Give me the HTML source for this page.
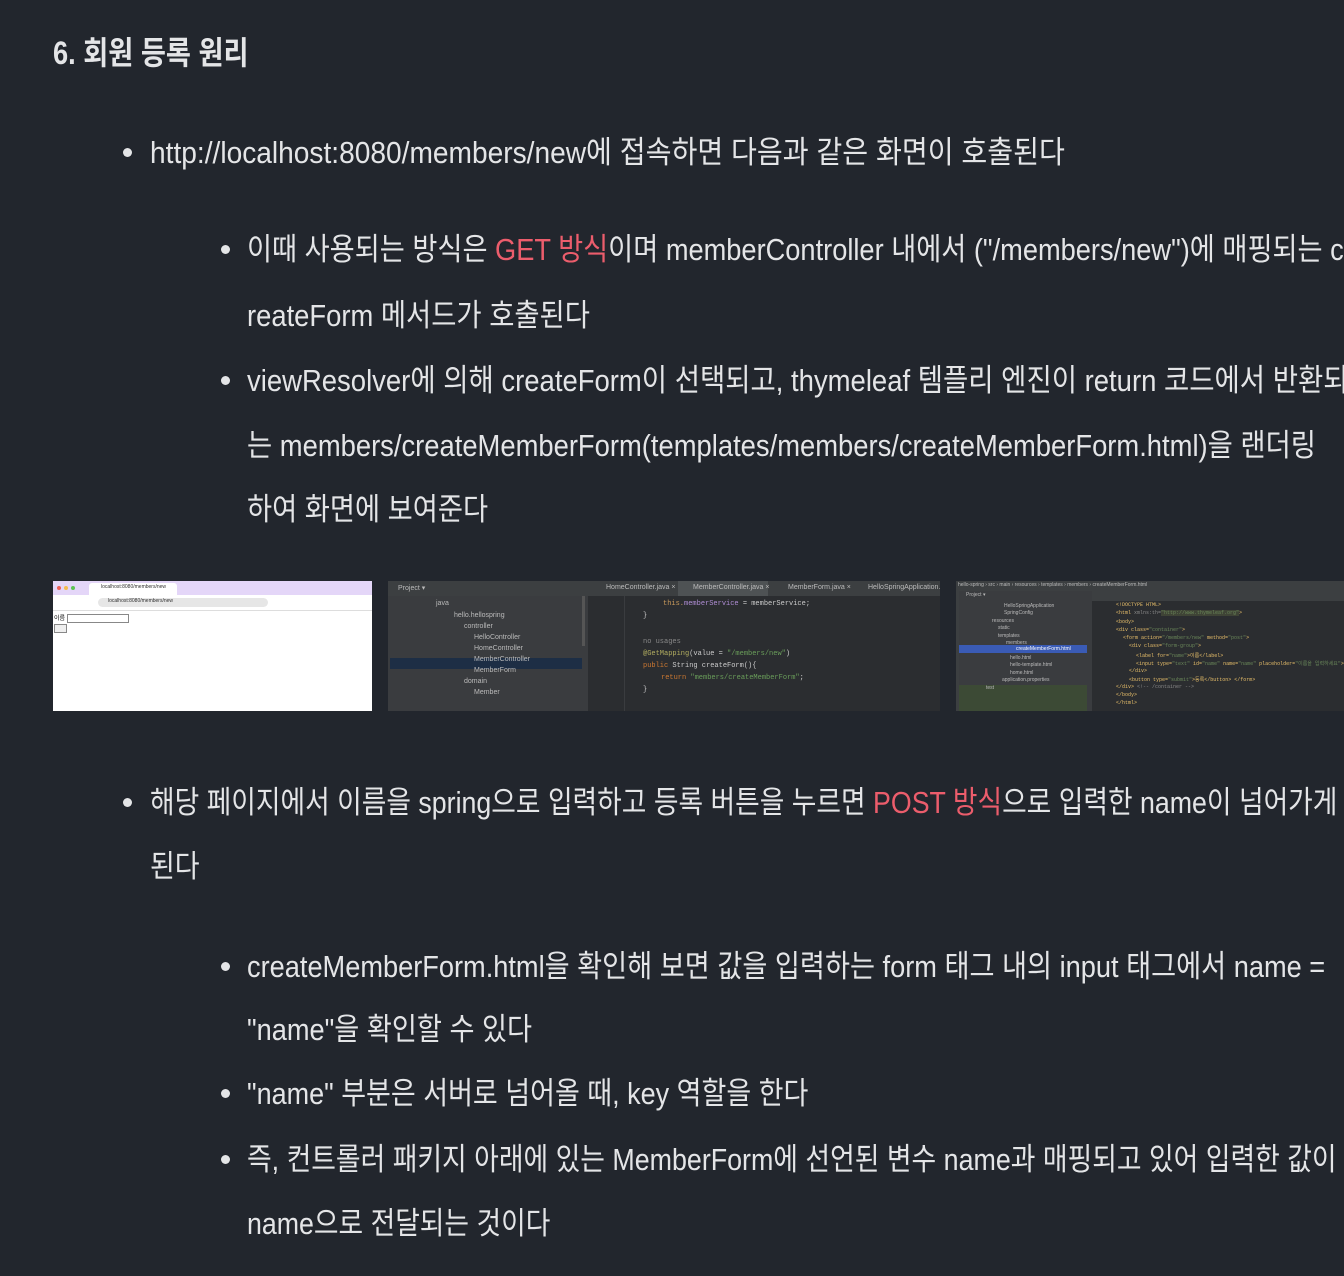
<!DOCTYPE html>
<html><head><meta charset="utf-8"><style>
html,body{margin:0;padding:0;width:1344px;height:1276px;overflow:hidden;background:#22262d;}
body{position:relative;font-family:"Liberation Sans","Noto Sans CJK KR",sans-serif;color:#e4e5e7;}
.l{position:absolute;white-space:nowrap;font-size:31px;line-height:40px;transform:scaleX(0.88);transform-origin:left center;}
.h{font-weight:bold;font-size:32px;}
.r{color:#ec5d6c;}
.b{position:absolute;width:9px;height:9px;border-radius:50%;background:#e4e5e7;}
.img{position:absolute;overflow:hidden;}
.mono{font-family:"Liberation Mono",monospace;font-size:7px;position:absolute;white-space:nowrap;}
.sm{font-size:7px;position:absolute;white-space:nowrap;color:#bbb;}
</style></head><body>
<div class="l h" style="left:53px;top:33px;transform:scaleX(0.85)">6. 회원 등록 원리</div>

<div class="b" style="left:123px;top:148px"></div>
<div class="l" style="left:150px;top:133px;transform:scaleX(0.907)">http://localhost:8080/members/new에 접속하면 다음과 같은 화면이 호출된다</div>

<div class="b" style="left:221px;top:245px"></div>
<div class="l" style="left:247px;top:230px;transform:scaleX(0.878)">이때 사용되는 방식은 <span class="r">GET 방식</span>이며 memberController 내에서 ("/members/new")에 매핑되는 c</div>
<div class="l" style="left:247px;top:296px;transform:scaleX(0.883)">reateForm 메서드가 호출된다</div>
<div class="b" style="left:221px;top:376px"></div>
<div class="l" style="left:247px;top:361px;transform:scaleX(0.886)">viewResolver에 의해 createForm이 선택되고, thymeleaf 템플리 엔진이 return 코드에서 반환되</div>
<div class="l" style="left:247px;top:426px;transform:scaleX(0.883)">는 members/createMemberForm(templates/members/createMemberForm.html)을 랜더링</div>
<div class="l" style="left:247px;top:490px;transform:scaleX(0.88)">하여 화면에 보여준다</div>

<!-- image 1: browser -->
<div class="img" style="left:53px;top:581px;width:319px;height:130px;background:#fff;">
  <div style="position:absolute;left:0;top:0;width:319px;height:14px;background:#e4d6f8;"></div>
  <div style="position:absolute;left:4px;top:5px;width:4px;height:4px;border-radius:50%;background:#ec5f57"></div>
  <div style="position:absolute;left:11px;top:5px;width:4px;height:4px;border-radius:50%;background:#f4bd4f"></div>
  <div style="position:absolute;left:18px;top:5px;width:4px;height:4px;border-radius:50%;background:#5ec454"></div>
  <div style="position:absolute;left:36px;top:2px;width:88px;height:12px;background:#fff;border-radius:3px 3px 0 0;"></div>
  <div class="sm" style="left:48px;top:3px;color:#333;font-size:5px">localhost:8080/members/new</div>
  <div style="position:absolute;left:45px;top:17px;width:170px;height:9px;background:#e6e6e6;border-radius:5px;"></div>
  <div class="sm" style="left:55px;top:17px;color:#333;font-size:5px">localhost:8080/members/new</div>
  <div style="position:absolute;left:0;top:29px;width:319px;height:1px;background:#ddd"></div>
  <div class="sm" style="left:1px;top:32px;color:#000;font-size:6px">이름</div>
  <div style="position:absolute;left:14px;top:33px;width:60px;height:7px;border:1px solid #888"></div>
  <div style="position:absolute;left:1px;top:43px;width:11px;height:7px;border:1px solid #888;background:#eee"></div>
</div>

<!-- image 2: IDE -->
<div class="img" style="left:388px;top:581px;width:552px;height:130px;background:#2b2d30;">
  <div style="position:absolute;left:0;top:0;width:552px;height:15px;background:#3c3f41"></div>
  <div class="sm" style="left:10px;top:3px">Project ▾</div>
  <div class="sm" style="left:218px;top:3px">HomeController.java ×</div>
  <div style="position:absolute;left:290px;top:0;width:90px;height:15px;background:#4e5254"></div>
  <div class="sm" style="left:305px;top:3px">MemberController.java ×</div>
  <div class="sm" style="left:400px;top:3px">MemberForm.java ×</div>
  <div class="sm" style="left:480px;top:3px">HelloSpringApplication.j</div>
  <div style="position:absolute;left:0;top:15px;width:200px;height:115px;background:#3a3c3f"></div>
  <div style="position:absolute;left:194px;top:15px;width:3px;height:50px;background:#555"></div>
  <div style="position:absolute;left:2px;top:77px;width:192px;height:11px;background:#1d2e45"></div>
  <div class="sm" style="left:48px;top:19px">java</div>
  <div class="sm" style="left:66px;top:31px">hello.hellospring</div>
  <div class="sm" style="left:76px;top:42px">controller</div>
  <div class="sm" style="left:86px;top:53px">HelloController</div>
  <div class="sm" style="left:86px;top:64px">HomeController</div>
  <div class="sm" style="left:86px;top:75px">MemberController</div>
  <div class="sm" style="left:86px;top:86px">MemberForm</div>
  <div class="sm" style="left:76px;top:97px">domain</div>
  <div class="sm" style="left:86px;top:108px">Member</div>
  <div style="position:absolute;left:200px;top:15px;width:36px;height:115px;background:#2b2d30;border-right:1px solid #3a3c3f"></div>
  <div class="mono" style="left:275px;top:19px;color:#c99a5b">this.<span style="color:#b18ed6">memberService</span> <span style="color:#ccc">= memberService;</span></div>
  <div class="mono" style="left:255px;top:31px;color:#ccc">}</div>
  <div class="mono" style="left:255px;top:57px;color:#888">no usages</div>
  <div class="mono" style="left:255px;top:69px;color:#b3ae60">@GetMapping<span style="color:#ccc">(value = </span><span style="color:#6a9e5a">"/members/new"</span><span style="color:#ccc">)</span></div>
  <div class="mono" style="left:255px;top:81px;color:#cc7832">public <span style="color:#ccc">String createForm(){</span></div>
  <div class="mono" style="left:273px;top:93px;color:#cc7832">return <span style="color:#6a9e5a">"members/createMemberForm"</span><span style="color:#ccc">;</span></div>
  <div class="mono" style="left:255px;top:105px;color:#ccc">}</div>
</div>

<!-- image 3: IDE html -->
<div class="img" style="left:956px;top:581px;width:388px;height:130px;background:#2b2d30;">
  <div style="position:absolute;left:0;top:0;width:388px;height:10px;background:#3c3f41"></div>
  <div class="sm" style="left:2px;top:1px;font-size:5px">hello-spring › src › main › resources › templates › members › createMemberForm.html</div>
  <div style="position:absolute;left:0;top:10px;width:3px;height:120px;background:#3c3f41"></div>
  <div style="position:absolute;left:3px;top:10px;width:133px;height:120px;background:#3a3c3f"></div>
  <div class="sm" style="left:10px;top:11px;font-size:5px">Project ▾</div>
  <div class="sm" style="left:48px;top:22px;font-size:5px">HelloSpringApplication</div>
  <div class="sm" style="left:48px;top:29px;font-size:5px">SpringConfig</div>
  <div class="sm" style="left:36px;top:37px;font-size:5px">resources</div>
  <div class="sm" style="left:42px;top:44px;font-size:5px">static</div>
  <div class="sm" style="left:42px;top:52px;font-size:5px">templates</div>
  <div class="sm" style="left:50px;top:59px;font-size:5px">members</div>
  <div style="position:absolute;left:3px;top:64px;width:128px;height:8px;background:#3a5bb5"></div>
  <div class="sm" style="left:60px;top:65px;font-size:5px;color:#fff">createMemberForm.html</div>
  <div class="sm" style="left:54px;top:74px;font-size:5px">hello.html</div>
  <div class="sm" style="left:54px;top:81px;font-size:5px">hello-template.html</div>
  <div class="sm" style="left:54px;top:89px;font-size:5px">home.html</div>
  <div class="sm" style="left:46px;top:96px;font-size:5px">application.properties</div>
  <div style="position:absolute;left:3px;top:104px;width:128px;height:26px;background:#3c4a35"></div>
  <div class="sm" style="left:30px;top:104px;font-size:5px">test</div>
  <div style="position:absolute;left:136px;top:10px;width:252px;height:10px;background:#3c3f41"></div>
  <div class="mono" style="left:160px;top:21px;color:#e8bf6a;font-size:5px">&lt;!DOCTYPE HTML&gt;</div>
  <div class="mono" style="left:160px;top:29px;color:#e8bf6a;font-size:5px">&lt;html <span style="color:#888">xmlns:th=</span><span style="background:#3f4436;color:#6a8759">"http://www.thymeleaf.org"</span>&gt;</div>
  <div class="mono" style="left:160px;top:38px;color:#e8bf6a;font-size:5px">&lt;body&gt;</div>
  <div class="mono" style="left:160px;top:46px;color:#e8bf6a;font-size:5px">&lt;div class=<span style="color:#6a8759">"container"</span>&gt;</div>
  <div class="mono" style="left:167px;top:54px;color:#e8bf6a;font-size:5px">&lt;form action=<span style="color:#6a8759">"/members/new"</span> method=<span style="color:#6a8759">"post"</span>&gt;</div>
  <div class="mono" style="left:173px;top:62px;color:#e8bf6a;font-size:5px">&lt;div class=<span style="color:#6a8759">"form-group"</span>&gt;</div>
  <div class="mono" style="left:180px;top:71px;color:#e8bf6a;font-size:5px">&lt;label for=<span style="color:#6a8759">"name"</span>&gt;이름&lt;/label&gt;</div>
  <div class="mono" style="left:180px;top:79px;color:#e8bf6a;font-size:5px">&lt;input type=<span style="color:#6a8759">"text"</span> id=<span style="color:#6a8759">"name"</span> name=<span style="color:#6a8759">"name"</span> placeholder=<span style="color:#6a8759">"이름을 입력하세요"</span>&gt;</div>
  <div class="mono" style="left:173px;top:87px;color:#e8bf6a;font-size:5px">&lt;/div&gt;</div>
  <div class="mono" style="left:173px;top:95px;color:#e8bf6a;font-size:5px">&lt;button type=<span style="color:#6a8759">"submit"</span>&gt;등록&lt;/button&gt; &lt;/form&gt;</div>
  <div class="mono" style="left:160px;top:103px;color:#e8bf6a;font-size:5px">&lt;/div&gt; <span style="color:#888">&lt;!-- /container --&gt;</span></div>
  <div class="mono" style="left:160px;top:111px;color:#e8bf6a;font-size:5px">&lt;/body&gt;</div>
  <div class="mono" style="left:160px;top:119px;color:#e8bf6a;font-size:5px">&lt;/html&gt;</div>
</div>

<div class="b" style="left:123px;top:798px"></div>
<div class="l" style="left:150px;top:783px;transform:scaleX(0.863)">해당 페이지에서 이름을 spring으로 입력하고 등록 버튼을 누르면 <span class="r">POST 방식</span>으로 입력한 name이 넘어가게</div>
<div class="l" style="left:150px;top:847px;transform:scaleX(0.87)">된다</div>

<div class="b" style="left:221px;top:962px"></div>
<div class="l" style="left:247px;top:947px;transform:scaleX(0.877)">createMemberForm.html을 확인해 보면 값을 입력하는 form 태그 내의 input 태그에서 name =</div>
<div class="l" style="left:247px;top:1010px;transform:scaleX(0.877)">"name"을 확인할 수 있다</div>
<div class="b" style="left:221px;top:1089px"></div>
<div class="l" style="left:247px;top:1074px;transform:scaleX(0.871)">"name" 부분은 서버로 넘어올 때, key 역할을 한다</div>
<div class="b" style="left:221px;top:1155px"></div>
<div class="l" style="left:247px;top:1140px;transform:scaleX(0.865)">즉, 컨트롤러 패키지 아래에 있는 MemberForm에 선언된 변수 name과 매핑되고 있어 입력한 값이</div>
<div class="l" style="left:247px;top:1204px;transform:scaleX(0.863)">name으로 전달되는 것이다</div>
</body></html>
